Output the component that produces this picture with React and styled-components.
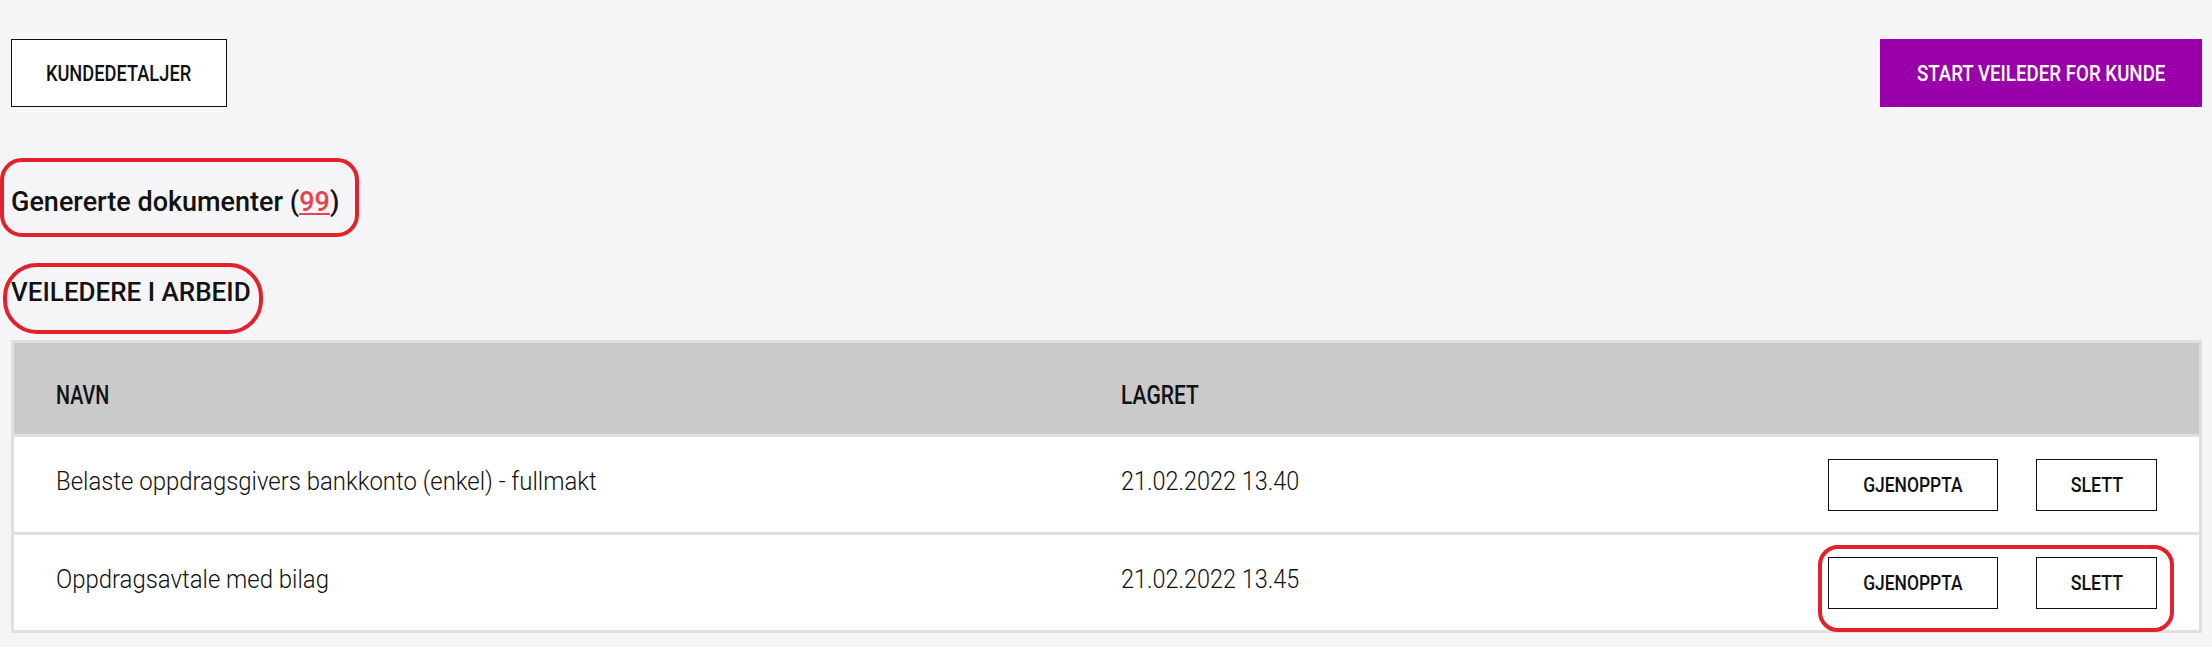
import React from "react";
import styled, { createGlobalStyle } from "styled-components";

const GlobalStyle = createGlobalStyle`
  body {
    margin: 0;
    background-color: #f5f5f7;
    font-family: Roboto, "Liberation Sans", sans-serif;
    color: #111;
  }
`;

const rows = [
  { name: "Belaste oppdragsgivers bankkonto (enkel) - fullmakt", saved: "21.02.2022 13.40" },
  { name: "Oppdragsavtale med bilag", saved: "21.02.2022 13.45", marked: true },
];

export default function App() {
  return (
    <>
      <GlobalStyle />
      <Page>
        <TopBar>
          <OutlineButton>
            <Narrow $sx={0.83} $origin="center">KUNDEDETALJER</Narrow>
          </OutlineButton>
          <PrimaryButton>
            <Narrow $sx={0.85} $origin="center">START VEILEDER FOR KUNDE</Narrow>
          </PrimaryButton>
        </TopBar>

        <Marked>
          <DocsTitle>
            Genererte dokumenter (<DocsLink href="#">99</DocsLink>)
          </DocsTitle>
          <Mark $top={-28} $left={-11} $right={-20} $bottom={-19} $radius={22} />
        </Marked>

        <Marked>
          <SectionTitle>VEILEDERE I ARBEID</SectionTitle>
          <Mark $top={-14} $left={-8} $right={-12} $bottom={-27} $radius={34} />
        </Marked>

        <Table>
          <HeadRow>
            <HeadCell>
              <Narrow $sx={0.76}>NAVN</Narrow>
            </HeadCell>
            <HeadCell>
              <Narrow $sx={0.81}>LAGRET</Narrow>
            </HeadCell>
            <HeadCell />
          </HeadRow>
          {rows.map((row) => (
            <Row key={row.name}>
              <Cell>
                <Narrow $sx={0.92}>{row.name}</Narrow>
              </Cell>
              <Cell>
                <Narrow $sx={0.9}>{row.saved}</Narrow>
              </Cell>
              <Actions>
                <RowButton $width={170}>
                  <Narrow $sx={0.83} $origin="center">GJENOPPTA</Narrow>
                </RowButton>
                <RowButton $width={121}>
                  <Narrow $sx={0.85} $origin="center">SLETT</Narrow>
                </RowButton>
                {row.marked && (
                  <Mark $top={-12} $left={-10} $right={-17} $bottom={-23} $radius={20} />
                )}
              </Actions>
            </Row>
          ))}
        </Table>
      </Page>
    </>
  );
}

const Page = styled.div`
  padding: 39px 10px 0 11px;
`;

const TopBar = styled.div`
  display: flex;
  justify-content: space-between;
  align-items: center;
`;

const Narrow = styled.span`
  display: inline-block;
  white-space: nowrap;
  transform: scaleX(${(p) => p.$sx});
  transform-origin: ${(p) => p.$origin || "left"} center;
`;

const OutlineButton = styled.button`
  width: 216px;
  height: 68px;
  background: white;
  border: 1px solid #111;
  font-family: inherit;
  font-size: 22px;
  font-weight: 500;
  color: #111;
  padding: 0;
`;

const PrimaryButton = styled.button`
  width: 322px;
  height: 68px;
  background: #9a00a9;
  border: none;
  font-family: inherit;
  font-size: 22px;
  font-weight: 500;
  color: white;
  padding: 0;
`;

const Marked = styled.div`
  position: relative;
  width: fit-content;
`;

const Mark = styled.span`
  position: absolute;
  top: ${(p) => p.$top}px;
  left: ${(p) => p.$left}px;
  right: ${(p) => p.$right}px;
  bottom: ${(p) => p.$bottom}px;
  border: 4px solid #e3212b;
  border-radius: ${(p) => p.$radius}px;
  pointer-events: none;
`;

const DocsTitle = styled.h2`
  margin: 79px 0 0;
  font-size: 27px;
  font-weight: 500;
  line-height: 32px;
`;

const DocsLink = styled.a`
  color: #e8434c;
  text-decoration: underline;
`;

const SectionTitle = styled.h3`
  margin: 59px 0 0;
  font-size: 26px;
  font-weight: 500;
  line-height: 30px;
`;

const Table = styled.div`
  margin-top: 33px;
  border: 3px solid #e0e0e0;
  background: white;
`;

const HeadRow = styled.div`
  display: grid;
  grid-template-columns: 1065px 1fr auto;
  align-items: center;
  height: 91px;
  background: #cacaca;
  border-bottom: 3px solid #e0e0e0;
`;

const HeadCell = styled.div`
  padding: 12px 0 0 42px;
  font-size: 26px;
  font-weight: 500;
`;

const Row = styled.div`
  display: grid;
  grid-template-columns: 1065px 1fr auto;
  align-items: center;
  height: 95px;
  border-bottom: 3px solid #e0e0e0;

  &:last-child {
    border-bottom: none;
  }
`;

const Cell = styled.div`
  padding: 0 0 8px 42px;
  font-size: 26px;
  font-weight: 300;
`;

const Actions = styled.div`
  position: relative;
  display: flex;
  gap: 38px;
  margin-right: 42px;
`;

const RowButton = styled.button`
  width: ${(p) => p.$width}px;
  height: 52px;
  background: white;
  border: 1px solid #111;
  font-family: inherit;
  font-size: 21px;
  font-weight: 500;
  color: #111;
  padding: 0;
`;
